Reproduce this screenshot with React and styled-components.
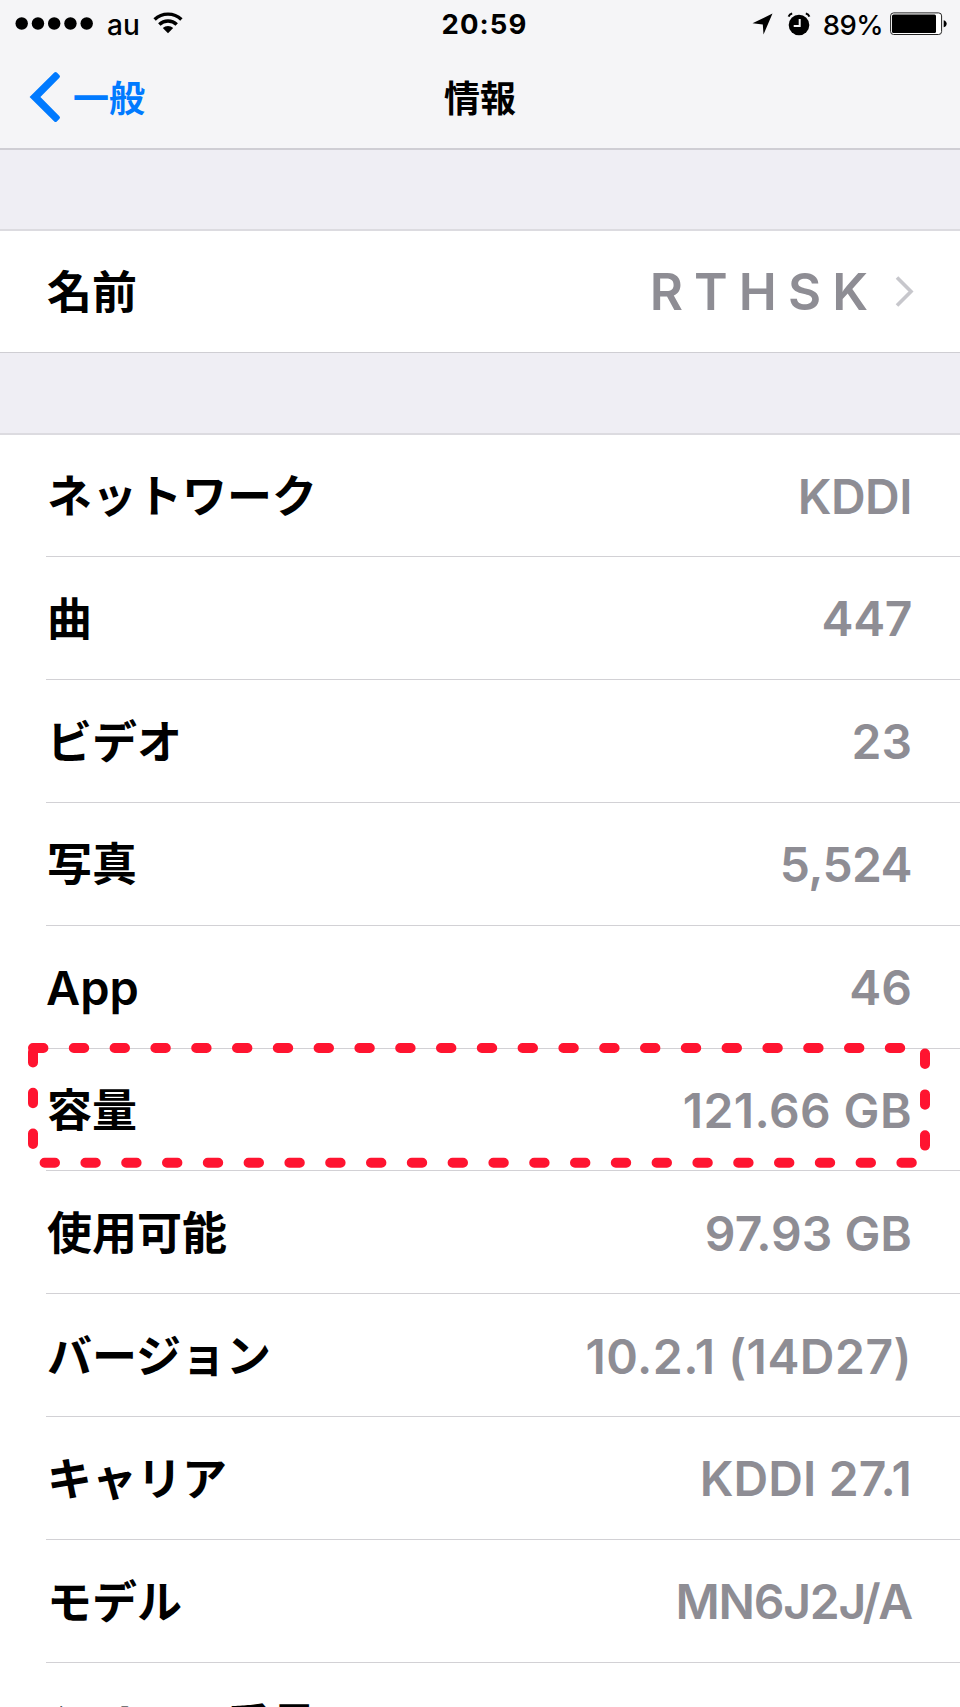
import styled, { createGlobalStyle } from "styled-components";

const GlobalStyle = createGlobalStyle`
  html,
  body {
    margin: 0;
    padding: 0;
  }
  body {
    background-color: #fff;
    overflow: hidden;
  }
`;

const Screen = styled.div`
  position: relative;
  width: 960px;
  height: 1707px;
  overflow: hidden;
  display: flex;
  flex-direction: column;
  background-color: #efeef4;
  color: #000;
  font-family: Inter, "Noto Sans CJK JP", sans-serif;
`;

const Header = styled.header`
  flex: none;
  box-sizing: border-box;
  height: 150px;
  background-color: #f5f5f7;
  border-bottom: 2px solid #cfced4;
`;

const StatusBar = styled.div`
  display: grid;
  grid-template-columns: 1fr auto 1fr;
  align-items: center;
  height: 48px;
  padding: 0 13px 0 15px;
  font-weight: 500;
`;

const StatusGroup = styled.div`
  display: flex;
  align-items: center;
  justify-content: ${(props) => (props.$end ? "flex-end" : "flex-start")};
`;

const Carrier = styled.span`
  margin: 1px 13px 0 13px;
  font-size: 28px;
  line-height: 34px;
`;

const Clock = styled.span`
  margin-left: 7px;
  font-size: 27.5px;
  font-weight: 700;
  letter-spacing: 1.1px;
`;

const BatteryLevel = styled.span`
  margin: 1px 7px 0 12px;
  font-size: 27.5px;
  line-height: 34px;
  letter-spacing: -0.6px;
`;

const AlarmIcon = styled.svg`
  margin-left: 14px;
`;

const NavBar = styled.nav`
  display: grid;
  grid-template-columns: 1fr auto 1fr;
  align-items: center;
  height: 98px;
  padding: 0 29px;
`;

const BackLink = styled.a`
  display: flex;
  align-items: center;
  gap: 11px;
  color: #007aff;
  font-size: 36px;
  font-weight: 600;
`;

const BackText = styled.span`
  margin-bottom: 3px;
`;

const Title = styled.h1`
  margin: 0 0 3px;
  font-size: 36px;
  font-weight: 600;
`;

const Group = styled.section`
  flex: none;
  margin-top: ${(props) => props.$gap}px;
  background-color: #fff;
  border-top: 2px solid #dcdbe0;
  border-bottom: 1px solid #cfced3;
`;

const Row = styled.div`
  box-sizing: border-box;
  display: flex;
  align-items: center;
  justify-content: space-between;
  height: 122.9px;
  margin-left: 46px;
  padding-top: 1.5px;
  padding-right: 48px;
  border-bottom: 1px solid #d2d1d5;
  &:first-of-type {
    height: 122px;
  }
`;

const NameRow = styled(Row)`
  border-bottom: none;
  padding-top: 0;
  padding-right: 46px;
  &:first-of-type {
    height: 121px;
  }
`;

const Label = styled.span`
  margin-left: ${(props) => (props.$latin ? 0 : 1)}px;
  margin-bottom: ${(props) => (props.$latin ? 0 : 5)}px;
  font-size: ${(props) => (props.$latin ? 47 : 45)}px;
  font-weight: 600;
`;

const Value = styled.span`
  color: #8e8d94;
  font-size: 48px;
  font-weight: 600;
  letter-spacing: ${(props) => props.$spacing || 0}px;
`;

const NameValue = styled.span`
  display: flex;
  align-items: center;
  gap: 27px;
  color: #8e8d94;
  font-size: 51px;
  font-weight: 600;
  word-spacing: -1.8px;
`;

const Highlight = styled.svg`
  position: absolute;
  left: 0;
  top: 1030px;
`;

const info = [
  { label: "ネットワーク", value: "KDDI", spacing: -0.5 },
  { label: "曲", value: "447", spacing: -0.4 },
  { label: "ビデオ", value: "23" },
  { label: "写真", value: "5,524", spacing: -0.6 },
  { label: "App", value: "46", latin: true },
  { label: "容量", value: "121.66 GB", spacing: 0.4 },
  { label: "使用可能", value: "97.93 GB" },
  { label: "バージョン", value: "10.2.1 (14D27)", spacing: 0.5 },
  { label: "キャリア", value: "KDDI 27.1", spacing: 0.1 },
  { label: "モデル", value: "MN6J2J/A", spacing: -1.2 },
  { label: "シリアル番号", value: "" },
];

function Signal() {
  return (
    <svg width="79" height="14" viewBox="0 0 79 14">
      {[0, 1, 2, 3, 4].map((i) => (
        <circle key={i} cx={6.7 + i * 16.25} cy="6.5" r="6.2" />
      ))}
    </svg>
  );
}

function Wifi() {
  return (
    <svg width="30" height="24" viewBox="0 0 30 24">
      <g fill="none" stroke="#000" strokeWidth="3.4">
        <path d="M1.6 7.5a19.3 19.3 0 0 1 26.8 0" />
        <path d="M6.3 12.5a12.4 12.4 0 0 1 17.4 0" />
      </g>
      <path d="M15 21.2l-5.2-5.1a7.5 7.5 0 0 1 10.4 0z" />
    </svg>
  );
}

function Location() {
  return (
    <svg width="21" height="22" viewBox="0 0 21 22">
      <path d="M20.5 0.5L11.5 21.5L10.8 11.6L0.5 10.3z" />
    </svg>
  );
}

function Alarm() {
  return (
    <AlarmIcon width="24" height="24" viewBox="0 0 24 24">
      <circle cx="12" cy="13" r="10.3" />
      <path d="M12.7 7v7h-6" fill="none" stroke="#f5f5f7" strokeWidth="2" />
      <path
        d="M1.6 4.6a5 5 0 0 1 3.6-3.1M22.4 4.6a5 5 0 0 0-3.6-3.1"
        fill="none"
        stroke="#000"
        strokeWidth="2"
      />
    </AlarmIcon>
  );
}

function Battery() {
  return (
    <svg width="57" height="24" viewBox="0 0 57 24">
      <rect x="0.6" y="0.9" width="51" height="21.6" rx="3" fill="#fff" stroke="#222" />
      <rect x="2" y="2.4" width="44" height="18.6" rx="1.5" />
      <path d="M53.7 8.2c4 1 4 6 0 7z" />
    </svg>
  );
}

export default function App() {
  return (
    <>
      <GlobalStyle />
      <Screen>
        <Header>
          <StatusBar>
            <StatusGroup>
              <Signal />
              <Carrier>au</Carrier>
              <Wifi />
            </StatusGroup>
            <Clock>20:59</Clock>
            <StatusGroup $end>
              <Location />
              <Alarm />
              <BatteryLevel>89%</BatteryLevel>
              <Battery />
            </StatusGroup>
          </StatusBar>
          <NavBar>
            <BackLink>
              <svg width="33" height="52" viewBox="0 0 33 52">
                <path
                  d="M25.3 1.6Q26.6 0.4 27.8 1.6L30.5 4.3Q31.6 5.5 30.4 6.7L11.4 26L30.4 45.3Q31.6 46.5 30.5 47.7L27.8 50.4Q26.6 51.6 25.3 50.4L0.6 26z"
                  fill="#007aff"
                />
              </svg>
              <BackText>一般</BackText>
            </BackLink>
            <Title>情報</Title>
          </NavBar>
        </Header>

        <Group $gap={79}>
          <NameRow>
            <Label>名前</Label>
            <NameValue>
              R T H S K
              <svg width="19" height="32" viewBox="0 0 19 32">
                <path d="M2 1.5L16 15.5L2 29.5" fill="none" stroke="#c7c7cc" strokeWidth="3.6" />
              </svg>
            </NameValue>
          </NameRow>
        </Group>

        <Group $gap={80}>
          {info.map((item) => (
            <Row key={item.label}>
              <Label $latin={item.latin}>{item.label}</Label>
              <Value $spacing={item.spacing}>{item.value}</Value>
            </Row>
          ))}
        </Group>

        <Highlight width="960" height="150" viewBox="0 1030 960 150">
          <rect
            x="33"
            y="1048"
            width="892"
            height="114.8"
            fill="none"
            stroke="#ff1430"
            strokeWidth="10"
            strokeLinecap="round"
            strokeDasharray="10.4 30.4"
          />
        </Highlight>
      </Screen>
    </>
  );
}
